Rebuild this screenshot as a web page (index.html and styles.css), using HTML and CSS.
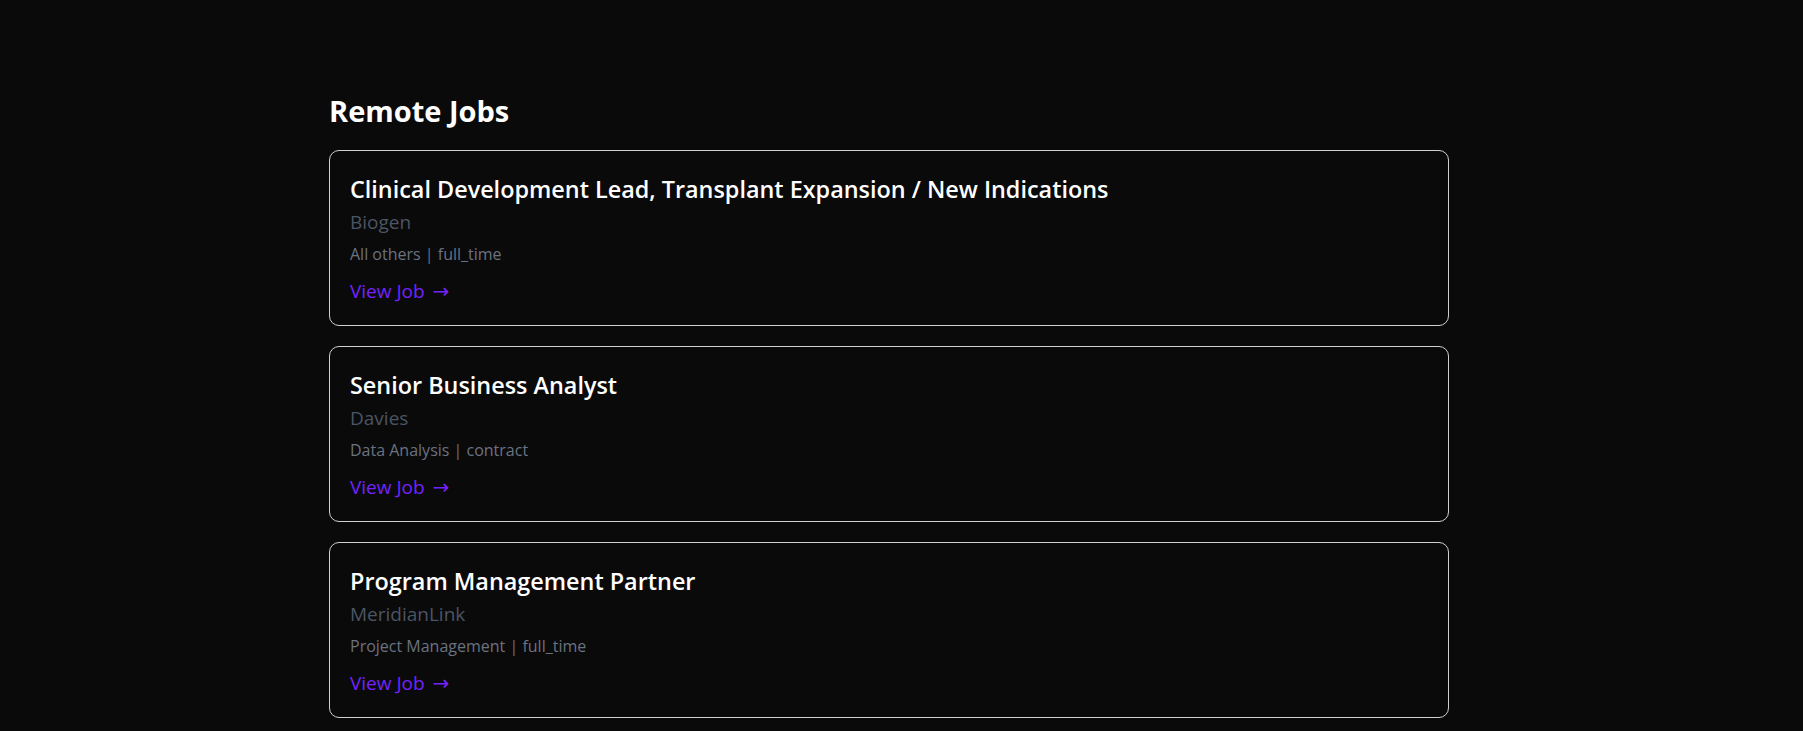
FILE: index.html
```html
<!DOCTYPE html>
<html lang="en">
<head>
<meta charset="utf-8">
<title>Remote Jobs</title>
<link rel="stylesheet" href="styles.css">
</head>
<body>
<main class="container">
  <h1 class="page-title">Remote Jobs</h1>
  <ul class="job-list">
    <li class="job-card">
      <h2 class="job-title">Clinical Development Lead, Transplant Expansion / New Indications</h2>
      <p class="job-company">Biogen</p>
      <p class="job-meta">All others | full_time</p>
      <a class="job-link" href="#">View Job <span class="arrow">→</span></a>
    </li>
    <li class="job-card">
      <h2 class="job-title">Senior Business Analyst</h2>
      <p class="job-company">Davies</p>
      <p class="job-meta">Data Analysis | contract</p>
      <a class="job-link" href="#">View Job <span class="arrow">→</span></a>
    </li>
    <li class="job-card">
      <h2 class="job-title">Program Management Partner</h2>
      <p class="job-company">MeridianLink</p>
      <p class="job-meta">Project Management | full_time</p>
      <a class="job-link" href="#">View Job <span class="arrow">→</span></a>
    </li>
  </ul>
</main>
</body>
</html>
```

FILE: styles.css
```css
* { box-sizing: border-box; }
html, body {
  margin: 0;
  padding: 0;
  background: #0a0a0a;
  color: #ffffff;
  font-family: "Open Sans", "Noto Sans", sans-serif;
}
.container {
  width: 1120px;
  margin-left: 329px;
  padding-top: 91px;
}
.page-title {
  margin: 0 0 19px 0;
  font-size: 29px;
  line-height: 40px;
  font-weight: 700;
  color: #ffffff;
}
.job-list {
  list-style: none;
  margin: 0;
  padding: 0;
  display: flex;
  flex-direction: column;
  gap: 20px;
}
.job-card {
  border: 1px solid #d0d0d0;
  border-radius: 10px;
  padding: 22px 20px 0 20px;
  height: 176px;
}
.job-title {
  margin: 0;
  font-size: 23.4px;
  line-height: 32px;
  font-weight: 600;
  color: #ffffff;
}
.job-company {
  margin: 3px 0 0 0;
  font-size: 19px;
  line-height: 28px;
  color: #4b5563;
}
.job-meta {
  margin: 6px 0 0 0;
  font-size: 16px;
  line-height: 24px;
  color: #6b7280;
}
.job-link {
  display: inline-block;
  margin-top: 11px;
  font-size: 19px;
  line-height: 28px;
  color: #7322ff;
  text-decoration: none;
}
.arrow {
  display: inline-block;
  margin-left: 3px;
  font-family: "DejaVu Sans", sans-serif;
  font-size: 20px;
  line-height: 28px;
}
```
